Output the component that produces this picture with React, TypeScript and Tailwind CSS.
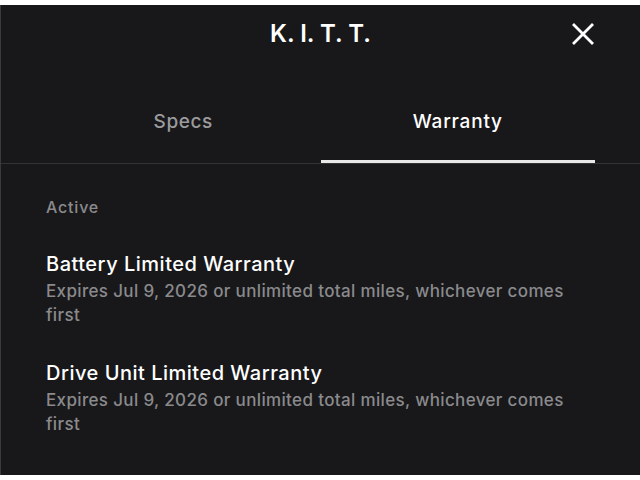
export default function App() {
  const warranties = [
    {
      title: "Battery Limited Warranty",
      detail: "Expires Jul 9, 2026 or unlimited total miles, whichever comes first",
    },
    {
      title: "Drive Unit Limited Warranty",
      detail: "Expires Jul 9, 2026 or unlimited total miles, whichever comes first",
    },
  ];

  return (
    <div className="w-[640px] h-[480px] bg-white pt-[5px] font-['Inter','Liberation_Sans',sans-serif]">
      <div className="h-[470px] bg-[#18181b] border-l border-[#3a3a3c] flex flex-col">
        {/* Header */}
        <div className="relative h-[58px] flex items-center justify-center">
          <h1 className="text-[24px] font-semibold text-white">K. I. T. T.</h1>
          <button className="absolute right-[45px] top-[17px] text-white">
            <svg width="24" height="24" viewBox="0 0 24 24" fill="none" stroke="currentColor" strokeWidth="2.8" strokeLinecap="square">
              <path d="M3 3L21 21M21 3L3 21" />
            </svg>
          </button>
        </div>

        {/* Tabs */}
        <div className="border-b border-[#333336]">
          <div className="flex px-[45px]">
            <div className="flex-1 flex flex-col items-center pt-[45px]">
              <span className="text-[19px] leading-[28px] font-medium tracking-[0.6px] text-[#9b9b9d]">Specs</span>
              <div className="h-[3px] mt-[24px] w-full" />
            </div>
            <div className="flex-1 flex flex-col items-center pt-[45px]">
              <span className="text-[19px] leading-[28px] font-medium tracking-[0.8px] text-white">Warranty</span>
              <div className="h-[3px] mt-[24px] w-full bg-[#e8e8e8]" />
            </div>
          </div>
        </div>

        {/* Content */}
        <div className="px-[45px] pt-[31px]">
          <p className="text-[16px] leading-[24px] font-medium tracking-[0.8px] text-[#8a8a8c]">Active</p>
          <div className="flex flex-col gap-[32px] mt-[31px]">
            {warranties.map((w) => (
              <div key={w.title} className="max-w-[540px]">
                <p className="text-[20px] leading-[28px] font-medium tracking-[0.5px] text-white">{w.title}</p>
                <p className="text-[17px] leading-[23.5px] font-medium tracking-[0.35px] text-[#8a8a8c] mt-[2px]">{w.detail}</p>
              </div>
            ))}
          </div>
        </div>
      </div>
    </div>
  );
}
